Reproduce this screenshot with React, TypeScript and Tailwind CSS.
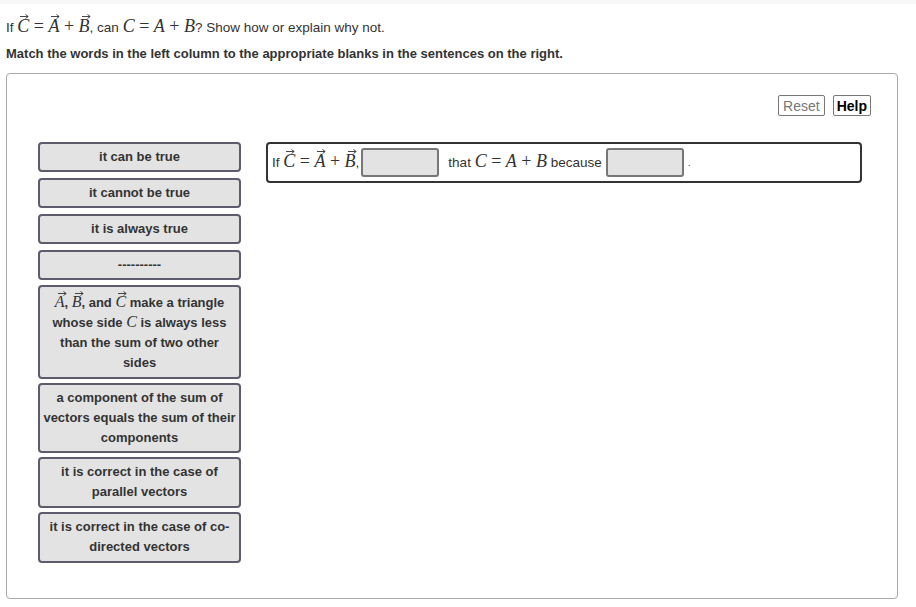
import React from "react";

const serif = "font-['Liberation_Serif',_'Times_New_Roman',_serif]";

function Arrow() {
  return (
    <svg
      className="absolute left-[3px] top-[-3px]"
      width="9"
      height="5"
      viewBox="0 0 9 5"
      fill="none"
    >
      <path d="M0 2.5H8M5.5 0.5L8.2 2.5L5.5 4.5" stroke="#333" strokeWidth="0.9" />
    </svg>
  );
}

function Vec({ v, small }: { v: string; small?: boolean }) {
  return (
    <span
      className={`relative inline-block italic ${serif} ${small ? "text-[16px]" : "text-[18px]"} font-normal leading-none`}
    >
      <Arrow />
      {v}
    </span>
  );
}

function M({ children }: { children: React.ReactNode }) {
  return <span className={`${serif} text-[18px] leading-none`}>{children}</span>;
}

function I({ v, small }: { v: string; small?: boolean }) {
  return (
    <span className={`italic ${serif} ${small ? "text-[16px]" : "text-[18px]"} font-normal leading-none`}>
      {v}
    </span>
  );
}

function VecSum() {
  return (
    <>
      <Vec v="C" />
      <M>&nbsp;=&nbsp;</M>
      <Vec v="A" />
      <M>&nbsp;+&nbsp;</M>
      <Vec v="B" />
    </>
  );
}

function ScalarSum() {
  return (
    <>
      <I v="C" />
      <M>&nbsp;=&nbsp;</M>
      <I v="A" />
      <M>&nbsp;+&nbsp;</M>
      <I v="B" />
    </>
  );
}

function Tile({ children, className = "" }: { children: React.ReactNode; className?: string }) {
  return (
    <div
      className={`rounded-[4px] border-2 border-[#5c5c6c] bg-[#e3e3e3] px-[1px] py-[3px] text-center text-[13px] font-bold leading-[20px] text-[#333] ${className}`}
    >
      {children}
    </div>
  );
}

function Blank() {
  return (
    <span className="inline-block h-[29px] w-[78px] rounded-[3px] border-2 border-[#777] bg-[#e3e3e3] align-middle" />
  );
}

export default function App() {
  return (
    <div className="min-h-[607px] bg-white font-['Liberation_Sans',_Arial,_sans-serif] text-[#333]">
      <div className="h-[4px] bg-[#f7f7f7]" />
      <div className="px-[6px]">
        <p className="mt-[13px] text-[13.5px] leading-[20px]">
          If <VecSum />, can <ScalarSum />? Show how or explain why not.
        </p>
        <p className="mt-[6px] text-[13px] font-bold leading-[20px]">
          Match the words in the left column to the appropriate blanks in the sentences on the right.
        </p>
        <div className="mt-[9px] h-[526px] w-[892px] rounded-[4px] border border-[#aaa] px-[31px] pt-[21px]">
          <div className="mr-[-5px] flex justify-end gap-[8px]">
            <button className="h-[21px] rounded-[2px] border border-[#777] px-[4px] text-[14px] leading-[18px] text-[#777]">
              Reset
            </button>
            <button className="h-[21px] rounded-[2px] border border-[#777] px-[3px] text-[14px] font-bold leading-[18px] text-black">
              Help
            </button>
          </div>
          <div className="mt-[26px] flex items-start gap-[25px]">
            <div className="flex w-[203px] flex-col">
              <Tile>it can be true</Tile>
              <Tile className="mt-[6px]">it cannot be true</Tile>
              <Tile className="mt-[6px]">it is always true</Tile>
              <Tile className="mt-[6px]">----------</Tile>
              <div className="mt-[5px] rounded-[4px] border-2 border-[#5c5c6c] bg-[#e3e3e3] px-[8px] pb-[4px] pt-[6px] text-center text-[13px] font-bold leading-[20px] text-[#333]">
                <Vec v="A" small />, <Vec v="B" small />, and <Vec v="C" small /> make a triangle whose side{" "}
                <I v="C" small /> is always less than the sum of two other sides
              </div>
              <Tile className="mt-[4px]">a component of the sum of vectors equals the sum of their components</Tile>
              <Tile className="mt-[4px] pb-[4px]">it is correct in the case of parallel vectors</Tile>
              <Tile className="mt-[4px] pb-[4px]">it is correct in the case of co-directed vectors</Tile>
            </div>
            <div className="flex h-[41px] w-[596px] items-center rounded-[4px] border-2 border-[#333] pl-[4px] text-[13.5px]">
              <span>
                If <VecSum />,
              </span>
              <span className="ml-[2px]">
                <Blank />
              </span>
              <span className="ml-[9px]">
                that <ScalarSum /> because
              </span>
              <span className="ml-[4px]">
                <Blank />
              </span>
              <span className="ml-[4px] text-[10px] text-[#1a4a9a]">.</span>
            </div>
          </div>
        </div>
      </div>
    </div>
  );
}
